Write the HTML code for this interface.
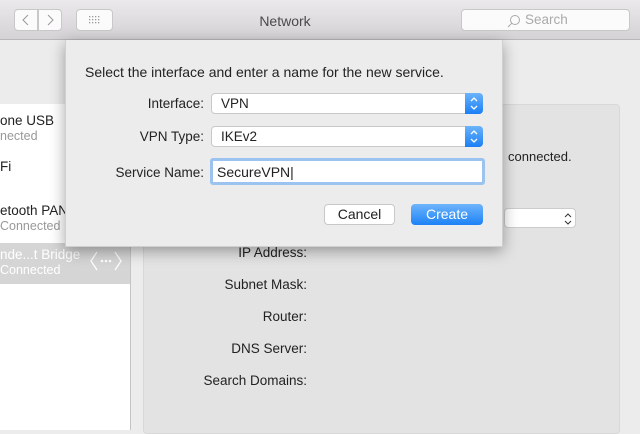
<!DOCTYPE html><html><head><style>
*{margin:0;padding:0;box-sizing:border-box}
body{width:640px;height:430px;overflow:hidden;background:#ececec;font-family:"Liberation Sans",sans-serif;font-size:13.5px;color:#222;position:relative}
.a{position:absolute}
.tb{left:0;top:0;width:640px;height:40px;background:linear-gradient(#ebe9eb,#d4d2d4);border-bottom:1px solid #b8b6b8}
.btn{background:#fbfbfb;border:1px solid #c8c8c8;border-radius:4px}
.side{left:0;top:104px;width:131px;height:326px;background:#fff;border-right:1px solid #c4c4c4}
.panel{left:143px;top:104px;width:477px;height:330px;background:#e3e3e3;border:1px solid #d8d8d8;border-radius:4px}
.lbl{text-align:right;width:200px}
.sheet{left:65px;top:40px;width:438px;height:207px;background:#ececec;box-shadow:0 4px 14px rgba(0,0,0,.35);border:1px solid #cfcfcf;border-top:none}
.pop{background:#fff;border:1px solid #c9c9c9;border-radius:4px;height:21px;padding:2px 9px}
.st{position:absolute;right:-1px;top:-1px;width:18px;height:21px;background:linear-gradient(#6cb3fa,#1a7ff5);border-radius:0 4px 4px 0}
</style></head><body>
<div class="a tb">
 <div class="a btn" style="left:14px;top:9px;width:24px;height:22px;border-radius:4px 0 0 4px"><svg width="22" height="20"><path d="M13 5l-5 5 5 5" stroke="#999" fill="none"/></svg></div>
 <div class="a btn" style="left:38px;top:9px;width:24px;height:22px;border-radius:0 4px 4px 0"><svg width="22" height="20"><path d="M9 5l5 5-5 5" stroke="#999" fill="none"/></svg></div>
 <div class="a btn" style="left:76px;top:9px;width:37px;height:22px"><svg width="35" height="20" fill="#999"><g><rect x="12" y="6" width="1.3" height="1.3"/><rect x="15" y="6" width="1.3" height="1.3"/><rect x="18" y="6" width="1.3" height="1.3"/><rect x="21" y="6" width="1.3" height="1.3"/><rect x="12" y="9" width="1.3" height="1.3"/><rect x="15" y="9" width="1.3" height="1.3"/><rect x="18" y="9" width="1.3" height="1.3"/><rect x="21" y="9" width="1.3" height="1.3"/><rect x="12" y="12" width="1.3" height="1.3"/><rect x="15" y="12" width="1.3" height="1.3"/><rect x="18" y="12" width="1.3" height="1.3"/><rect x="21" y="12" width="1.3" height="1.3"/></g></svg></div>
 <div class="a" style="left:0;width:570px;top:13px;text-align:center;font-size:14px;color:#4a4a4a">Network</div>
 <div class="a btn" style="left:461px;top:9px;width:169px;height:22px;color:#aaa;font-size:13.5px;line-height:20px;padding-left:63px"><svg class="a" style="left:45px;top:4px" width="14" height="14"><circle cx="8" cy="6" r="4.5" stroke="#aaa" fill="none"/><path d="M4.8 9.2L1 13" stroke="#aaa"/></svg>Search</div>
</div>
<div class="a side">
 <div class="a" style="left:0;top:9px">one USB</div>
 <div class="a" style="left:0;top:25px;font-size:12.5px;color:#999">nected</div>
 <div class="a" style="left:0;top:55px">Fi</div>
 <div class="a" style="left:0;top:99px">etooth PAN</div>
 <div class="a" style="left:0;top:115px;font-size:12.5px;color:#999">Connected</div>
 <div class="a" style="left:0;top:139px;width:130px;height:41px;background:#d5d5d5"></div>
 <div class="a" style="left:0;top:143px;color:#fff">nde...t Bridge</div>
 <div class="a" style="left:0;top:159px;font-size:12.5px;color:#fff">Connected</div>
 <svg class="a" style="left:89px;top:146px" width="34" height="22"><path d="M8 2L2 11l6 9M26 2l6 9-6 9" stroke="#fff" fill="none" stroke-width="1.3"/><circle cx="13" cy="11" r="1.3" fill="#fff"/><circle cx="17" cy="11" r="1.3" fill="#fff"/><circle cx="21" cy="11" r="1.3" fill="#fff"/></svg>
</div>
<div class="a panel">
 <div class="a" style="left:364px;top:44px;font-size:13px">connected.</div>
 <div class="a" style="left:360px;top:103px;width:72px;height:20px;background:#fff;border:1px solid #ccc;border-radius:4px"><svg class="a" style="left:58px;top:3px" width="10" height="14"><path d="M2 5l3-3 3 3M2 9l3 3 3-3" stroke="#333" fill="none"/></svg></div>
 <div class="a lbl" style="left:-37px;top:140px">IP Address:</div>
 <div class="a lbl" style="left:-37px;top:172px">Subnet Mask:</div>
 <div class="a lbl" style="left:-37px;top:204px">Router:</div>
 <div class="a lbl" style="left:-37px;top:236px">DNS Server:</div>
 <div class="a lbl" style="left:-37px;top:268px">Search Domains:</div>
</div>
<div class="a sheet">
 <div class="a" style="left:19px;top:24px;font-size:14px">Select the interface and enter a name for the new service.</div>
 <div class="a" style="left:0;width:138px;text-align:right;top:56px">Interface:</div>
 <div class="a pop" style="left:145px;top:53px;width:272px">VPN<div class="st"><svg width="18" height="21"><path d="M6 8l3-3 3 3M6 13l3 3 3-3" stroke="#fff" fill="none" stroke-width="1.3"/></svg></div></div>
 <div class="a" style="left:0;width:138px;text-align:right;top:89px">VPN Type:</div>
 <div class="a pop" style="left:145px;top:86px;width:272px">IKEv2<div class="st"><svg width="18" height="21"><path d="M6 8l3-3 3 3M6 13l3 3 3-3" stroke="#fff" fill="none" stroke-width="1.3"/></svg></div></div>
 <div class="a" style="left:0;width:138px;text-align:right;top:125px">Service Name:</div>
 <div class="a" style="left:144px;top:118px;width:275px;height:27px;border:3px solid #9cc3ef;border-radius:3px;background:#fff;padding:3px 4px;font-size:14px">SecureVPN|</div>
 <div class="a" style="left:258px;top:164px;width:71px;height:21px;background:#fff;border:1px solid #c8c8c8;border-radius:4px;text-align:center;line-height:19px;font-size:14px">Cancel</div>
 <div class="a" style="left:345px;top:164px;width:72px;height:21px;background:linear-gradient(#6db4fb,#1d82f6);border-radius:4px;text-align:center;line-height:21px;color:#fff;font-size:14px">Create</div>
</div>
</body></html>
